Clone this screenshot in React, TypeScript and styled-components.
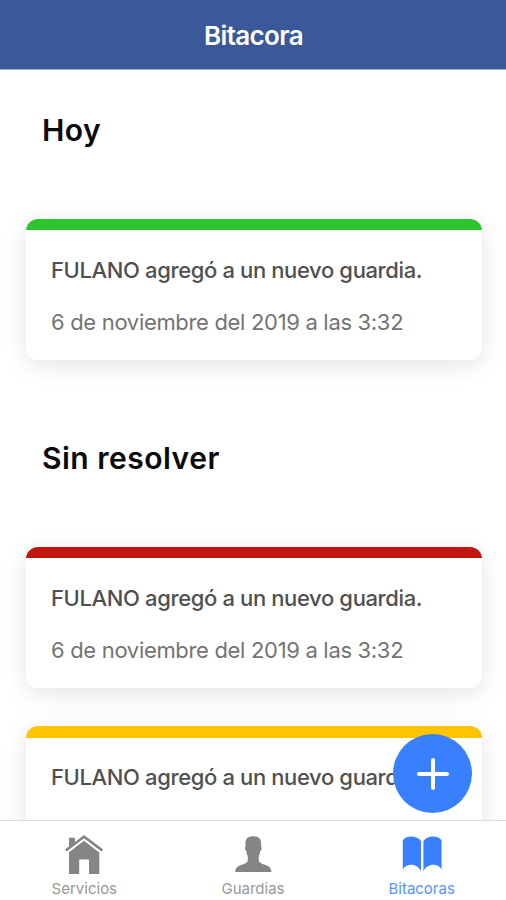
import React from "react";
import styled, { createGlobalStyle } from "styled-components";

const GlobalStyle = createGlobalStyle`
  *, *::before, *::after { box-sizing: border-box; }
  body {
    margin: 0;
    background: #fff;
    font-family: Inter, "Liberation Sans", sans-serif;
    overflow: hidden;
  }
  h1, h2, p { margin: 0; }
`;

const Screen = styled.div`
  position: relative;
  display: flex;
  flex-direction: column;
  height: 900px;
  background: #fff;
  overflow: hidden;
`;

const Header = styled.header`
  flex: none;
  display: flex;
  align-items: center;
  justify-content: center;
  height: 70px;
  padding: 2px 0 0 1px;
  background: #3b5998;
  border-bottom: 1px solid #a3b0cf;
`;

const Title = styled.h1`
  color: #fff;
  font-size: 26px;
  line-height: 32px;
  font-weight: 600;
  letter-spacing: -0.65px;
`;

const Content = styled.main`
  flex: 1;
  min-height: 0;
  overflow: hidden;
  padding: 0 24px 0 26px;
`;

const SectionTitle = styled.h2`
  padding: 42px 0 0 16px;
  height: 149px;
  color: #0b0b0b;
  font-size: 30px;
  line-height: 36px;
  font-weight: 600;
  letter-spacing: 0.5px;
`;

const CardList = styled.div`
  display: flex;
  flex-direction: column;
  gap: 38px;
  margin-bottom: 38px;
`;

const Card = styled.article<{ $accent: string }>`
  height: 141px;
  border-radius: 12px;
  padding: 38px 25px 0;
  background: linear-gradient(${(p) => p.$accent} 11.5px, #fff 11.5px);
  box-shadow: 0 5px 24px rgba(0, 0, 0, 0.11);
  white-space: nowrap;
`;

const Message = styled.p`
  color: #505050;
  font-size: 22px;
  line-height: 26px;
  font-weight: 500;
  letter-spacing: -0.37px;
`;

const DateText = styled.p`
  margin-top: 26px;
  color: #747474;
  font-size: 22px;
  line-height: 26px;
  letter-spacing: -0.32px;
`;

const TabBar = styled.nav`
  flex: none;
  display: grid;
  grid-template-columns: repeat(3, 1fr);
  height: 80px;
  background: #fff;
  border-top: 1px solid #dcdcdc;
`;

const Tab = styled.a<{ $active?: boolean }>`
  display: flex;
  flex-direction: column;
  align-items: center;
  padding-top: 13px;
  color: ${(p) => (p.$active ? "#3880ff" : "#858585")};
`;

const TabLabel = styled.span`
  margin-top: 6px;
  font-size: 15px;
  line-height: 18px;
  opacity: 0.84;
`;

const AddButton = styled.button`
  position: absolute;
  right: 34px;
  bottom: 87px;
  display: flex;
  align-items: center;
  justify-content: center;
  width: 79px;
  height: 79px;
  padding: 0;
  border: 0;
  border-radius: 50%;
  background: #3880ff;
`;

const HomeIcon = () => (
  <svg width="40" height="40" viewBox="0 0 40 40" fill="currentColor">
    <path d="M20 1 39 15.300 37.400 17.500 20 4.300 2.600 17.500 1 15.300 5 12.400V3.800h6v4.100z" />
    <path d="M20 6.800 35.300 18.500V40H25V25.500H15.200V40H5V18.300z" />
  </svg>
);

const PersonIcon = () => (
  <svg width="40" height="40" viewBox="0 0 40 40" fill="currentColor">
    <path d="M20.300 2.300c5.600 0 7.800 2.700 7.800 6.800v3.500c.8.400.6 2.200.1 3.300-.3.700-.6 1-1 1.100-.2 2.200-.7 3.900-1.400 5.100v4c0 1.900 1.300 3 3.300 3.700 5.200 1.800 9 2.600 9.300 8.100H2.200c.3-5.500 4.100-6.300 9.300-8.100 2-.7 3.300-1.800 3.300-3.700v-4c-.7-1.200-1.200-2.900-1.400-5.100-.4-.1-.7-.4-1-1.100-.5-1.100-.7-2.900.1-3.300V9.100c0-4.100 2.200-6.800 7.800-6.800z" />
  </svg>
);

const BookIcon = () => (
  <svg width="40" height="40" viewBox="0 0 40 40" fill="currentColor">
    <path d="M.8 6.200C3 3.600 6 2.600 9 2.600c4.500 0 8.100 1.500 10 4.600V37.300C17 33 13.300 30.800 9.300 30.800c-3.500 0-6.500 1.400-8.500 4.600z" />
    <path d="M39.600 6.200C37.400 3.600 34.400 2.600 31.400 2.600c-4.500 0-8.100 1.500-10 4.600V37.300c2-4.300 5.700-6.500 9.700-6.500 3.500 0 6.500 1.400 8.500 4.600z" />
  </svg>
);

const PlusIcon = () => (
  <svg width="36" height="36" viewBox="0 0 36 36" fill="none" stroke="#fff" strokeWidth="4" strokeLinecap="round">
    <path d="M18 4v28M4 18h28" />
  </svg>
);

const LogCard = ({ accent, date }: { accent: string; date?: string }) => (
  <Card $accent={accent}>
    <Message>FULANO agregó a un nuevo guardia.</Message>
    {date && <DateText>{date}</DateText>}
  </Card>
);

export default function App() {
  return (
    <>
      <GlobalStyle />
      <Screen>
        <Header>
          <Title>Bitacora</Title>
        </Header>
        <Content>
          <SectionTitle>Hoy</SectionTitle>
          <CardList>
            <LogCard accent="#2dc52d" date="6 de noviembre del 2019 a las 3:32" />
          </CardList>
          <SectionTitle>Sin resolver</SectionTitle>
          <CardList>
            <LogCard accent="#c11510" date="6 de noviembre del 2019 a las 3:32" />
            <LogCard accent="#ffc400" />
          </CardList>
        </Content>
        <TabBar>
          <Tab>
            <HomeIcon />
            <TabLabel>Servicios</TabLabel>
          </Tab>
          <Tab>
            <PersonIcon />
            <TabLabel>Guardias</TabLabel>
          </Tab>
          <Tab $active>
            <BookIcon />
            <TabLabel>Bitacoras</TabLabel>
          </Tab>
        </TabBar>
        <AddButton aria-label="Agregar">
          <PlusIcon />
        </AddButton>
      </Screen>
    </>
  );
}
